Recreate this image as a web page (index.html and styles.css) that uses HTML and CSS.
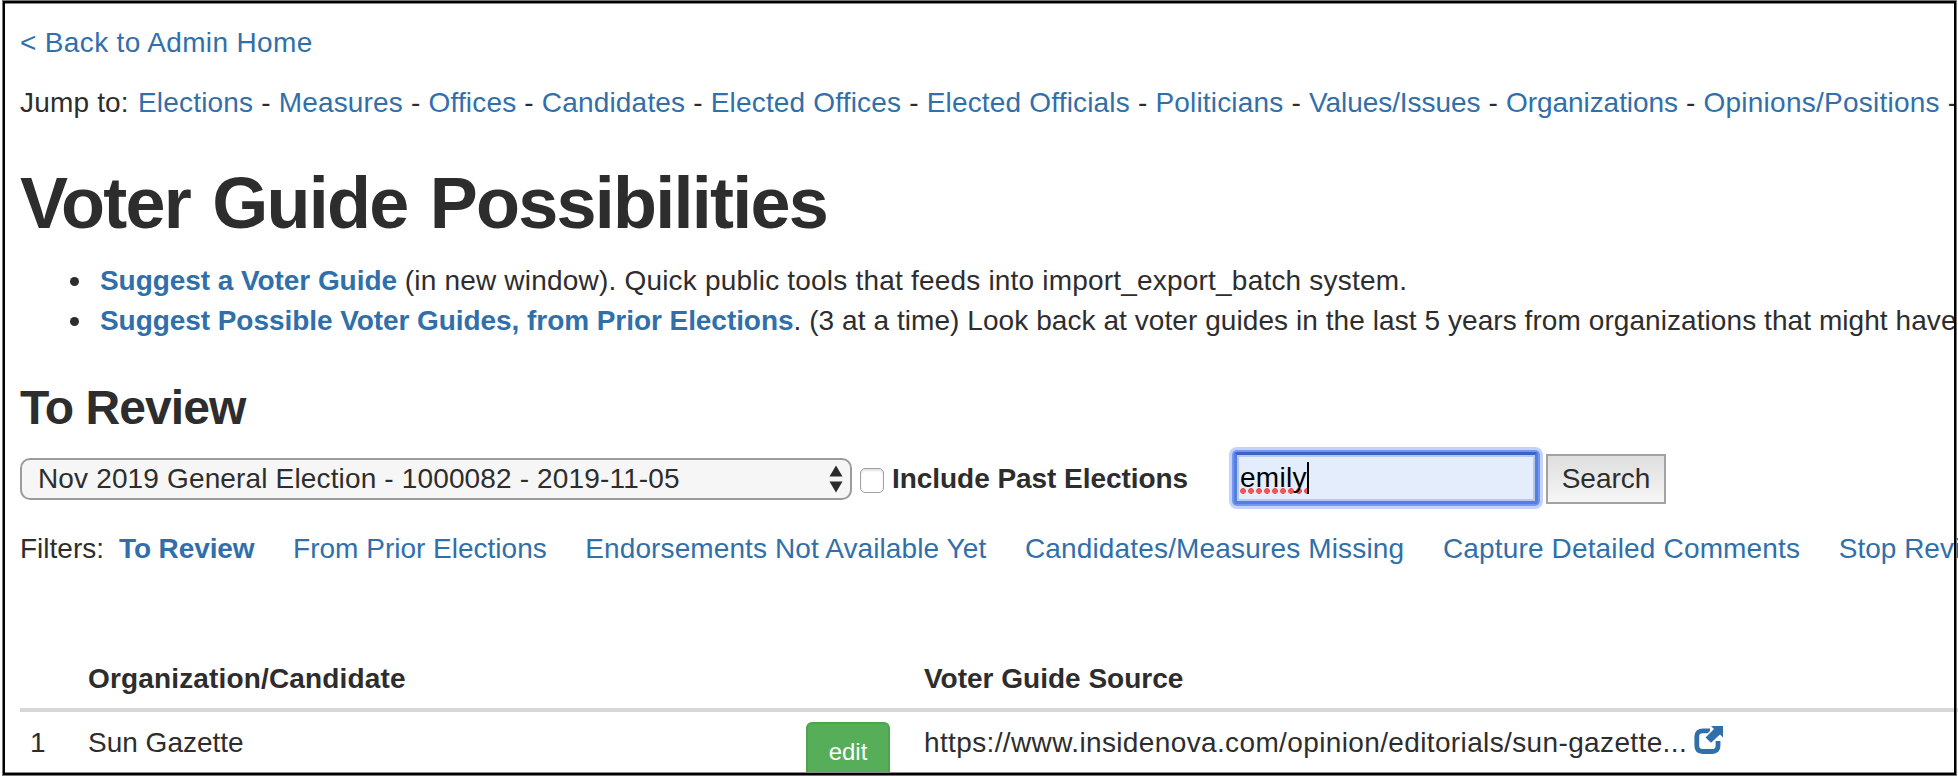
FILE: index.html
```html
<!DOCTYPE html>
<html lang="en">
<head>
<meta charset="utf-8">
<title>Voter Guide Possibilities</title>
<link rel="stylesheet" href="styles.css">
</head>
<body>
<main class="page">
  <p class="back"><a href="#">&lt; Back to Admin Home</a></p>
  <nav class="jump"><span class="lead">Jump to:</span> <a href="#">Elections</a> - <a href="#">Measures</a> - <a href="#">Offices</a> - <a href="#">Candidates</a> - <a href="#">Elected Offices</a> - <a href="#">Elected Officials</a> - <a href="#">Politicians</a> - <a class="snug" href="#">Values/Issues</a> - <a class="snug" href="#">Organizations</a> - <a class="loose" href="#">Opinions/Positions</a> -</nav>
  <h1>Voter Guide Possibilities</h1>
  <ul class="tools">
    <li><a href="#"><b>Suggest a Voter Guide</b></a> <span class="wide">(in new window). Quick public tools that feeds into import_export_batch system.</span></li>
    <li><a href="#"><b>Suggest Possible Voter Guides, from Prior Elections</b></a><span class="note">. (3 at a time) Look back at voter guides in the last 5 years from organizations that might have</span></li>
  </ul>
  <h2>To Review</h2>
  <form class="controls">
    <div class="select"><span>Nov 2019 General Election - 1000082 - 2019-11-05</span>
      <svg width="14" height="28" viewBox="0 0 14 28"><path d="M7 0.500l6.500 11h-13zM7 27.500l6.500-11h-13z" fill="#2b2b2b"/></svg>
    </div>
    <span class="checkbox"></span>
    <label class="include">Include Past Elections</label>
    <div class="field"><span class="typed">emily</span><span class="caret"></span></div>
    <button type="button" class="search">Search</button>
  </form>
  <nav class="filters"><span>Filters:</span><a class="active" href="#">To Review</a><a href="#">From Prior Elections</a><a class="even" href="#">Endorsements Not Available Yet</a><a class="open" href="#">Candidates/Measures Missing</a><a class="open" href="#">Capture Detailed Comments</a><a href="#">Stop Revi</a></nav>
  <section class="table">
    <div class="row head"><span class="num"></span><span class="org">Organization/Candidate</span><span class="act"></span><span class="src">Voter Guide Source</span></div>
    <div class="row"><span class="num">1</span><span class="org">Sun Gazette</span><span class="act"><a class="edit" href="#">edit</a></span><span class="src"><span class="url">https://www.insidenova.com/opinion/editorials/sun-gazette...</span>
      <svg class="ext" width="30" height="30" viewBox="0 0 30 30"><path d="M16 4.800H9Q2.800 4.800 2.800 10.500v9q0 6 6 6h9.500q5.700 0 5.700-5.500v-5" fill="none" stroke="#316fab" stroke-width="4.800"/><path d="M17 0h12v11.500l-3-3-9 8.200-5.500-5.200 8.500-8.500z" fill="#316fab" stroke="#fff" stroke-width="3" paint-order="stroke"/></svg></span></div>
  </section>
</main>
<div class="frame"></div>
</body>
</html>
```
FILE: styles.css
```css
* { box-sizing: border-box; }
html, body { margin: 0; height: 776px; overflow: hidden; background: #fff; }
body {
  font-family: "Liberation Sans", Arial, sans-serif;
  font-size: 28px;
  line-height: 40px;
  color: #2d2d2d;
}
a { color: #316fab; text-decoration: none; }
.page { padding: 23px 0 0 20px; height: 776px; overflow: hidden; white-space: nowrap; }
.back { margin: 0 0 20px; letter-spacing: 0.35px; }
.jump { height: 40px; letter-spacing: 0.18px; }
.lead { margin-right: 1.2px; }
.snug { letter-spacing: -0.05px; }
.loose { letter-spacing: 0.25px; }
h1 { margin: 41px 0 0; font-size: 72px; line-height: 79px; height: 79px; letter-spacing: -1.75px; word-spacing: 4px; }
.tools { margin: 18px 0 0; padding: 0 0 0 80px; list-style: none; }
.tools li::before {
  content: ""; display: inline-block; width: 9px; height: 9px;
  margin: 0 21px 0 -30px; border-radius: 50%; background: #2d2d2d; vertical-align: 4px;
}
.tools b { letter-spacing: -0.06px; }
.wide { letter-spacing: 0.2px; }
.note { letter-spacing: 0.07px; }
h2 { margin: 40px 0 0; font-size: 48px; line-height: 53px; height: 53px; letter-spacing: -0.95px; }
.controls { display: flex; align-items: flex-start; height: 62px; margin-top: 13px; }
.select {
  display: flex; align-items: center; justify-content: space-between;
  width: 832px; height: 42px; margin-top: 11px; padding: 0 7px 0 16px;
  border: 2px solid #9b9b9b; border-radius: 10px; background: #f6f6f6; letter-spacing: 0.15px;
}
.checkbox {
  width: 24px; height: 25px; margin: 21px 8px 0 8px;
  border: 1.5px solid #a0a0a0; border-radius: 5px; background: #fff;
  box-shadow: inset 0 2px 2px #e2e2e2;
}
.include { width: 342px; margin-top: 12px; font-weight: bold; letter-spacing: -0.05px; }
.field {
  display: flex; align-items: center;
  width: 304px; height: 52px; margin-top: 5px; padding-left: 3px;
  border: 3px solid #547fe0; border-top-color: #3c63bd; border-radius: 3px;
  background: #e4edfc; color: #000;
  box-shadow: 0 0 0 2px #7197f0, 0 0 0 5px #c3d3fa, inset 0 0 0 2px #b4c8f2;
}
.typed {
  letter-spacing: 0.3px;
  background: radial-gradient(circle at 3px 3px, #f25555 2.6px, transparent 3.2px) 0 30px / 8px 6px repeat-x;
}
.caret { width: 2px; height: 32px; background: #000; }
.search {
  width: 120px; height: 50px; margin: 7px 0 0 8px; padding: 0;
  border: 2px solid #a2a2a2; background: linear-gradient(#dedede, #f6f6f6);
  font: inherit; color: #2d2d2d;
}
.filters { display: flex; height: 40px; margin-top: 20px; gap: 38.6px; }
.filters span { margin-right: -23.6px; }
.active { font-weight: bold; letter-spacing: -0.1px; }
.even { letter-spacing: 0.1px; }
.open { letter-spacing: 0.16px; }
.table { margin-top: 90px; }
.row { display: flex; height: 64px; }
.head { height: 53px; font-weight: bold; border-bottom: 4px solid #d7d7d7; }
.num { width: 68px; padding-left: 10px; }
.org { width: 718px; }
.head .org { letter-spacing: 0.16px; }
.act { width: 118px; }
.row:not(.head) { padding-top: 11px; }
.edit {
  display: block; width: 84px; height: 60px; margin-top: -1px; padding-top: 8px;
  border: 2px solid #4aa64c; border-radius: 6px; background: #56ae59;
  color: #fff; font-size: 24px; text-align: center;
}
.src { display: flex; }
.url { letter-spacing: 0.37px; }
.ext { margin: 3px 0 0 7px; }
.frame {
  position: fixed; left: 2px; top: 0; width: 1955px; height: 776px;
  border: 1px solid #777; pointer-events: none;
  box-shadow: inset 0 0 0 2px #000, inset 0 3px 0 #888, inset 0 -3px 0 #888;
}
```
